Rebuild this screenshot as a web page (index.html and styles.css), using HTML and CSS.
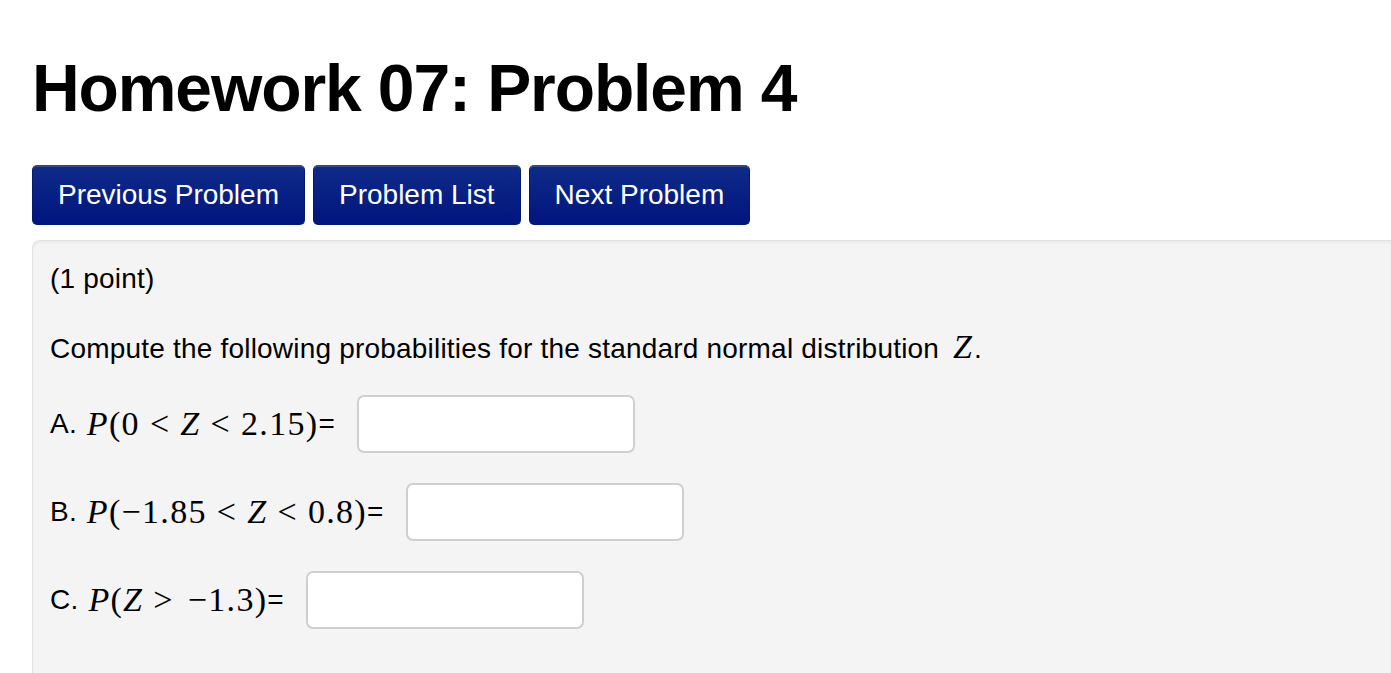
FILE: index.html
```html
<!DOCTYPE html>
<html>
<head>
<meta charset="utf-8">
<link rel="stylesheet" href="styles.css">
</head>
<body>
<main class="page">
  <h1 class="title">Homework 07: Problem 4</h1>
  <nav class="nav">
    <button class="nav-btn">Previous Problem</button>
    <button class="nav-btn">Problem List</button>
    <button class="nav-btn">Next Problem</button>
  </nav>
  <section class="problem">
    <p class="points">(1 point)</p>
    <p class="prompt">Compute the following probabilities for the standard normal distribution <span class="math"><i>Z</i></span>.</p>
    <div class="part">
      <span class="label">A.</span>
      <span class="math"><i>P</i>(0<span class="rel">&lt;</span><i>Z</i><span class="rel">&lt;</span>2.15)</span><span class="eq">=</span>
      <input class="answer" type="text">
    </div>
    <div class="part">
      <span class="label">B.</span>
      <span class="math"><i>P</i>(&minus;1.85<span class="rel">&lt;</span><i>Z</i><span class="rel">&lt;</span>0.8)</span><span class="eq">=</span>
      <input class="answer" type="text">
    </div>
    <div class="part">
      <span class="label">C.</span>
      <span class="math"><i>P</i>(<i>Z</i><span class="rel rel-wide">&gt;</span>&minus;1.3)</span><span class="eq">=</span>
      <input class="answer" type="text">
    </div>
  </section>
</main>
</body>
</html>
```

FILE: styles.css
```css
html, body {
  margin: 0;
  padding: 0;
  background: #fff;
}

body {
  font-family: "Liberation Sans", Arial, sans-serif;
  color: #000;
  overflow: hidden;
  height: 673px;
}

.page {
  padding-left: 32px;
}

.title {
  margin: 0;
  padding-top: 55px;
  font-size: 66px;
  line-height: 66px;
  font-weight: bold;
  letter-spacing: -1.1px;
}

.nav {
  display: flex;
  gap: 8px;
  margin-top: 44px;
}

.nav-btn {
  height: 60px;
  padding: 0 25px;
  font-family: "Liberation Sans", Arial, sans-serif;
  font-size: 28px;
  color: #fff;
  background: linear-gradient(#0f2b88, #00157f);
  border: 1px solid #061a6c;
  border-top-color: #2a4396;
  border-radius: 5px;
  box-shadow: inset 0 1px 0 rgba(255,255,255,0.15);
  cursor: pointer;
}

.problem {
  margin-top: 15px;
  height: 440px;
  background: #f4f4f4;
  border: 1px solid #e2e2e2;
  border-right: none;
  border-radius: 8px 0 0 0;
  box-shadow: inset 0 2px 2px rgba(0,0,0,0.04);
  padding: 22px 0 0 17px;
  font-size: 28px;
  letter-spacing: 0.2px;
}

.points {
  margin: 0;
  line-height: 32px;
}

.prompt {
  margin: 36px 0 0;
  line-height: 32px;
}

.math {
  font-family: "Liberation Serif", "Times New Roman", serif;
  font-size: 34px;
  letter-spacing: 1.3px;
}

.math i {
  font-style: italic;
}

.prompt .math {
  margin-left: 6px;
  margin-right: 2px;
  letter-spacing: 0;
}

.rel {
  margin: 0 10px;
}

.rel-wide {
  margin-right: 14px;
}

.part {
  display: flex;
  align-items: center;
  height: 58px;
  margin-top: 30px;
}

.prompt + .part {
  margin-top: 30px;
}

.label {
  margin-right: 10px;
}

.eq {
  margin-right: 22px;
}

.answer {
  box-sizing: border-box;
  height: 58px;
  width: 278px;
  margin: 0;
  border: 2px solid #cfcfcf;
  border-radius: 7px;
  background: #fff;
  padding: 0 8px;
  font-size: 26px;
}
```
